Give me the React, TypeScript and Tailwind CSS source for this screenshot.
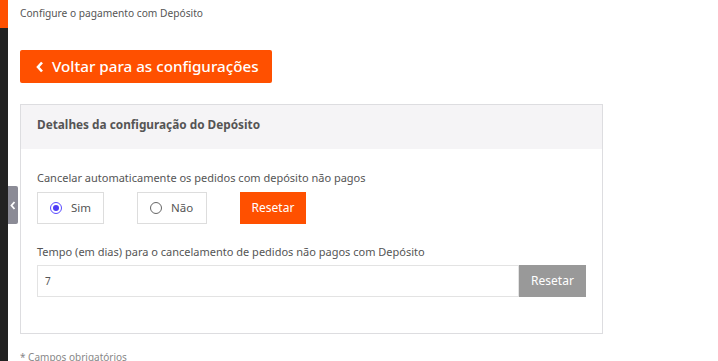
import React from 'react';

const font = { fontFamily: '"Noto Sans", "Open Sans", sans-serif' };

export default function App() {
  return (
    <div className="flex h-[361px] overflow-hidden bg-white text-[#555]" style={font}>
      {/* left strip */}
      <div className="relative flex w-2 shrink-0 flex-col">
        <div className="h-7 bg-[#ff5000]" />
        <div className="flex-1 bg-[#222]" />
        <div className="absolute left-2 top-[186px] flex h-[38px] w-[10px] items-center justify-center rounded-r-[2px] bg-[#8b8b96] text-white">
          <svg width="6" height="9" viewBox="0 0 6 9" fill="none">
            <path d="M4.5 1 1.5 4.5 4.5 8" stroke="currentColor" strokeWidth="1.8" />
          </svg>
        </div>
      </div>

      <main className="flex-1 pl-3">
        <p className="pt-[5px] text-[10.2px] leading-4 text-[#555]">Configure o pagamento com Depósito</p>

        <button className="mt-[29px] flex h-[33px] w-[252px] items-center gap-2 rounded-[2px] bg-[#ff5000] pl-4 text-[15.2px] font-medium text-white">
          <svg width="8" height="12" viewBox="0 0 8 12" fill="none">
            <path d="M6 1.5 2 6l4 4.5" stroke="currentColor" strokeWidth="2.6" />
          </svg>
          Voltar para as configurações
        </button>

        <section className="mt-[21px] w-[583px] border border-[#dddde0]">
          <div className="flex h-[44px] items-center bg-[#f5f4f6] px-4 pb-[5px]">
            <h2 className="text-[11.8px] font-bold text-[#555]">Detalhes da configuração do Depósito</h2>
          </div>

          <div className="px-4 pb-9 pt-[21px]">
            <p className="text-[11px] leading-4 text-[#555]">Cancelar automaticamente os pedidos com depósito não pagos</p>
            <div className="mt-[6px] flex items-center">
              <label className="flex h-[32px] w-[67px] items-center gap-[9px] border border-[#ddd] pl-[12px] text-[11.5px]">
                <span className="flex h-[12px] w-[12px] items-center justify-center rounded-full border border-[#5a4bff]">
                  <span className="h-[6px] w-[6px] rounded-full bg-[#4e3cf5]" />
                </span>
                Sim
              </label>
              <label className="ml-[33px] flex h-[32px] w-[70px] items-center gap-[9px] border border-[#ddd] pl-[12px] text-[11.5px]">
                <span className="h-[12px] w-[12px] rounded-full border border-[#666]" />
                Não
              </label>
              <button className="ml-[33px] h-[32px] w-[66px] bg-[#ff5000] text-[12px] text-white">Resetar</button>
            </div>

            <p className="mt-[20px] text-[11px] leading-4 text-[#555]">Tempo (em dias) para o cancelamento de pedidos não pagos com Depósito</p>
            <div className="mt-[5px] flex h-[32px]">
              <div className="flex flex-1 items-center border border-[#e3e3e3] pl-[7px] text-[10px]">7</div>
              <button className="w-[67px] bg-[#999] text-[12px] text-white">Resetar</button>
            </div>
          </div>
        </section>

        <p className="mt-[16px] text-[10px] text-[#888]">* Campos obrigatórios</p>
      </main>
    </div>
  );
}
